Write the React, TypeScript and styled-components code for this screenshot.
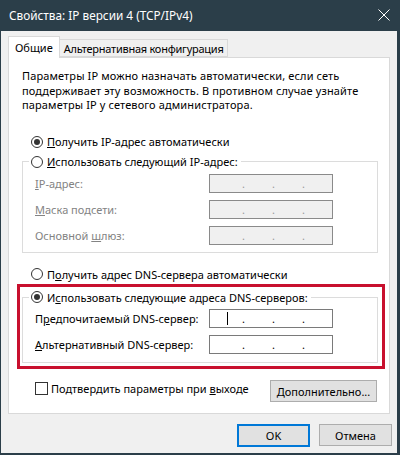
import React from "react";
import styled, { createGlobalStyle } from "styled-components";

const Global = createGlobalStyle`
  html, body { margin: 0; padding: 0; width: 400px; height: 455px; overflow: hidden; background: #2b3e49; }
  * { box-sizing: border-box; }
  body { font-family: "Noto Sans", "Segoe UI", sans-serif; font-size: 11px; color: #000; }
`;

const Window = styled.div`
  width: 400px;
  height: 455px;
  display: flex;
  flex-direction: column;
`;

const TitleBar = styled.div`
  height: 31px;
  flex: none;
  background: #2b3e49;
  color: #fff;
  display: flex;
  align-items: center;
  justify-content: space-between;
  padding: 0 10px 1px 9px;
  font-size: 11.8px;
`;

const Client = styled.div`
  flex: 1;
  display: flex;
  flex-direction: column;
  background: #f0f0f0;
  border-left: 1px solid #2b3e49;
  border-right: 3px solid #2b3e49;
  border-bottom: 2px solid #2b3e49;
  padding: 6px 7px 0 7px;
`;

const TabStrip = styled.div`
  display: flex;
  align-items: flex-end;
  height: 21px;
  position: relative;
  z-index: 1;
  margin-bottom: -1px;
`;

const Tab = styled.div<{ $active?: boolean }>`
  height: ${(p) => (p.$active ? 22 : 18)}px;
  display: flex;
  align-items: center;
  padding: 0 ${(p) => (p.$active ? 6 : 4)}px;
  background: ${(p) => (p.$active ? "#fff" : "#f0f0f0")};
  border: 1px solid #d9d9d9;
  border-bottom: ${(p) => (p.$active ? "none" : "1px solid #d9d9d9")};
  border-left: ${(p) => (p.$active ? "1px solid #d9d9d9" : "none")};
  margin-bottom: ${(p) => (p.$active ? 0 : 1)}px;
  letter-spacing: ${(p) => (p.$active ? 0 : -0.25)}px;
  white-space: nowrap;
`;

const Panel = styled.div`
  height: 357px;
  background: #fff;
  border: 1px solid #d9d9d9;
  padding: 0 11px 0 13px;
  display: flex;
  flex-direction: column;
`;

const Intro = styled.p`
  margin: 11px 0 0 0;
  line-height: 14.5px;
  letter-spacing: 0.12px;
`;

const OptionRow = styled.label<{ $mt?: number; $ml?: number }>`
  display: flex;
  align-items: center;
  height: 14px;
  margin-top: ${(p) => p.$mt ?? 0}px;
  margin-left: ${(p) => p.$ml ?? 0}px;
  gap: 4px;
  white-space: nowrap;
`;

const Radio = styled.span<{ $checked?: boolean }>`
  width: 12px;
  height: 12px;
  border-radius: 50%;
  border: 1px solid #333;
  background: #fff;
  display: flex;
  align-items: center;
  justify-content: center;
  flex: none;
  &::after {
    content: "";
    width: 6px;
    height: 6px;
    border-radius: 50%;
    background: ${(p) => (p.$checked ? "#333" : "transparent")};
  }
`;

const Check = styled.span`
  width: 13px;
  height: 13px;
  border: 1px solid #333;
  background: #fff;
  flex: none;
`;

const Key = styled.u`
  text-decoration: underline;
  text-underline-offset: 1px;
  text-decoration-thickness: 1px;
`;

const Group = styled.fieldset<{ $mt?: number; $pb?: number }>`
  margin: ${(p) => p.$mt ?? 0}px 0 0 0;
  min-width: 0;
  border: 1px solid #dcdcdc;
  padding: 0 0 ${(p) => p.$pb ?? 7}px 12px;
  display: flex;
  flex-direction: column;
  gap: 7px;
`;

const Legend = styled.legend`
  padding: 0 3px 0 2px;
  margin-left: -6px;
  height: 14px;
  margin-bottom: 5px;
`;

const FieldRow = styled.div`
  display: grid;
  grid-template-columns: 174px 124px;
  align-items: center;
  height: 19px;
`;

const FieldLabel = styled.span<{ $disabled?: boolean }>`
  color: ${(p) => (p.$disabled ? "#838383" : "#000")};
  white-space: nowrap;
`;

const IpBox = styled.div<{ $disabled?: boolean }>`
  height: 19px;
  border: 1px solid ${(p) => (p.$disabled ? "#8a8a8a" : "#7a7a7a")};
  background: ${(p) => (p.$disabled ? "#f0f0f0" : "#fff")};
  display: flex;
  align-items: center;
  padding-left: 4px;
  color: ${(p) => (p.$disabled ? "#9a9a9a" : "#000")};
`;

const Seg = styled.span`
  width: 29px;
  height: 17px;
  flex: none;
  display: flex;
  align-items: center;
`;

const Dot = styled.span`
  width: 1px;
  flex: none;
  display: flex;
  justify-content: center;
  line-height: 17px;
  height: 17px;
  font-size: 11px;
`;

const Caret = styled.span`
  width: 1px;
  height: 13px;
  background: #000;
  margin-left: 13px;
`;

const RedFrame = styled.div`
  margin: 3px -7px 0 -5px;
  border: 3px solid #c8102e;
  padding: 3px 4px 3px 2px;
`;

const BottomRow = styled.div`
  display: flex;
  justify-content: space-between;
  align-items: flex-start;
  margin-top: 11px;
  padding: 0 1px 0 13px;
`;

const CheckRow = styled.label`
  display: flex;
  align-items: center;
  gap: 3px;
  margin-top: 2px;
  height: 13px;
  white-space: nowrap;
`;

const Button = styled.button<{ $w: number; $default?: boolean }>`
  width: ${(p) => p.$w}px;
  height: ${(p) => (p.$default ? 23 : 22)}px;
  font-family: inherit;
  font-size: 11px;
  color: #000;
  background: #e1e1e1;
  border: ${(p) => (p.$default ? "2px solid #0078d7" : "1px solid #adadad")};
  padding: 0;
  display: flex;
  align-items: center;
  justify-content: center;
`;

const DialogButtons = styled.div`
  display: flex;
  justify-content: flex-end;
  gap: 9px;
  margin: 10px -2px 0 0;
`;

function Ip({ disabled, caret }: { disabled?: boolean; caret?: boolean }) {
  return (
    <IpBox $disabled={disabled}>
      <Seg>{caret && <Caret />}</Seg>
      <Dot>.</Dot>
      <Seg />
      <Dot>.</Dot>
      <Seg />
      <Dot>.</Dot>
      <Seg />
    </IpBox>
  );
}

export default function App() {
  return (
    <Window>
      <Global />
      <TitleBar>
        <span>Свойства: IP версии 4 (TCP/IPv4)</span>
        <svg width="12" height="12" viewBox="0 0 12 12">
          <path d="M0.5 0.5 L11.5 11.5 M11.5 0.5 L0.5 11.5" stroke="#fff" strokeWidth="1" />
        </svg>
      </TitleBar>
      <Client>
        <TabStrip>
          <Tab $active>Общие</Tab>
          <Tab>Альтернативная конфигурация</Tab>
        </TabStrip>
        <Panel>
          <Intro>
            Параметры IP можно назначать автоматически, если сеть
            <br />
            поддерживает эту возможность. В противном случае узнайте
            <br />
            параметры IP у сетевого администратора.
          </Intro>
          <OptionRow $mt={22} $ml={9}>
            <Radio $checked />
            <span>
              <Key>П</Key>олучить IP-адрес автоматически
            </span>
          </OptionRow>
          <Group $mt={6}>
            <Legend>
              <OptionRow>
                <Radio />
                <span>
                  <Key>И</Key>спользовать следующий IP-адрес:
                </span>
              </OptionRow>
            </Legend>
            <FieldRow>
              <FieldLabel $disabled>
                <Key>I</Key>P-адрес:
              </FieldLabel>
              <Ip disabled />
            </FieldRow>
            <FieldRow>
              <FieldLabel $disabled>
                <Key>М</Key>аска подсети:
              </FieldLabel>
              <Ip disabled />
            </FieldRow>
            <FieldRow>
              <FieldLabel $disabled>
                Основной <Key>ш</Key>люз:
              </FieldLabel>
              <Ip disabled />
            </FieldRow>
          </Group>
          <OptionRow $mt={14.5} $ml={9}>
            <Radio />
            <span>
              П<Key>о</Key>лучить адрес DNS-сервера автоматически
            </span>
          </OptionRow>
          <RedFrame>
            <Group $pb={8}>
              <Legend>
                <OptionRow>
                  <Radio $checked />
                  <span>
                    И<Key>с</Key>пользовать следующие адреса DNS-серверов:
                  </span>
                </OptionRow>
              </Legend>
              <FieldRow>
                <FieldLabel>
                  П<Key>р</Key>едпочитаемый DNS-сервер:
                </FieldLabel>
                <Ip caret />
              </FieldRow>
              <FieldRow>
                <FieldLabel>
                  <Key>А</Key>льтернативный DNS-сервер:
                </FieldLabel>
                <Ip />
              </FieldRow>
            </Group>
          </RedFrame>
          <BottomRow>
            <CheckRow>
              <Check />
              <span>
                Подтвердить параметры при <Key>в</Key>ыходе
              </span>
            </CheckRow>
            <Button $w={107}>
              <span>
                <Key>Д</Key>ополнительно...
              </span>
            </Button>
          </BottomRow>
        </Panel>
        <DialogButtons>
          <Button $w={73} $default>
            OK
          </Button>
          <Button $w={73}>Отмена</Button>
        </DialogButtons>
      </Client>
    </Window>
  );
}
